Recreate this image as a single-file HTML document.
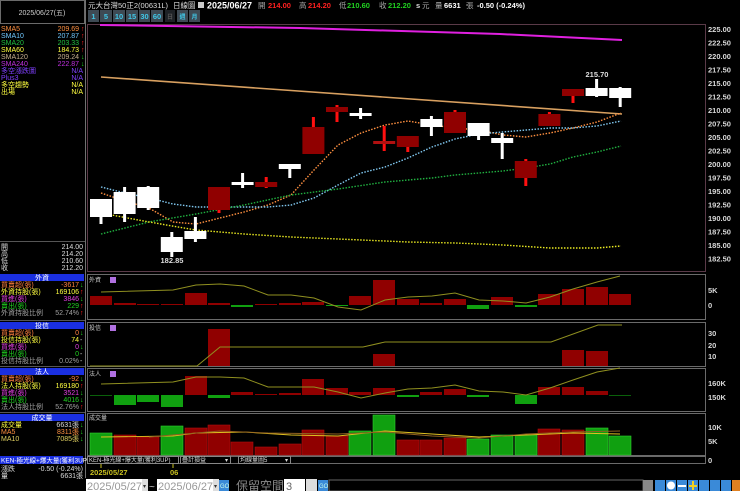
<!DOCTYPE html>
<html><head><meta charset="utf-8"><style>
html,body{margin:0;padding:0;background:#000;width:740px;height:491px;overflow:hidden}
svg{display:block}
text{font-family:"Liberation Sans","Noto Sans CJK TC",sans-serif}
.s{font-size:7px}
.ax{font-size:7.5px;font-weight:bold;fill:#d8d8d8}
</style></head><body>
<svg width="740" height="491" viewBox="0 0 740 491" xmlns="http://www.w3.org/2000/svg">
<rect width="740" height="491" fill="#000"/>
<!-- left panel -->
<rect x="0.5" y="0.5" width="84" height="23" fill="#000" stroke="#6a6a6a"/>
<text x="42" y="15" text-anchor="middle" class="s" fill="#cfcfcf" font-size="7.5">2025/06/27(五)</text>
<line x1="85.5" y1="0" x2="85.5" y2="478" stroke="#707070"/>
<g class="s">
<text x="1" y="31" fill="#ff9040">SMA5</text><text x="79" y="31" text-anchor="end" fill="#ff9040">209.69</text><text x="81" y="31" fill="#ff2020">↑</text>
<text x="1" y="38" fill="#70c8ff">SMA10</text><text x="79" y="38" text-anchor="end" fill="#70c8ff">207.87</text><text x="81" y="38" fill="#ff2020">↑</text>
<text x="1" y="45" fill="#20c040">SMA20</text><text x="79" y="45" text-anchor="end" fill="#20c040">203.33</text><text x="81" y="45" fill="#ff2020">↑</text>
<text x="1" y="52" fill="#ffff40">SMA60</text><text x="79" y="52" text-anchor="end" fill="#ffff40">184.73</text><text x="81" y="52" fill="#ff2020">↑</text>
<text x="1" y="59" fill="#c8b090">SMA120</text><text x="79" y="59" text-anchor="end" fill="#c8b090">209.24</text><text x="81" y="59" fill="#20d020">↓</text>
<text x="1" y="66" fill="#c030e0">SMA240</text><text x="79" y="66" text-anchor="end" fill="#c030e0">222.87</text><text x="81" y="66" fill="#20d020">↓</text>
<text x="1" y="73" fill="#8040ff">多空漲跌圖</text><text x="83" y="73" text-anchor="end" fill="#8040ff">N/A</text>
<text x="1" y="80" fill="#8040ff">Plus3</text><text x="83" y="80" text-anchor="end" fill="#8040ff">N/A</text>
<text x="1" y="87" fill="#ffff40">多空趨勢</text><text x="83" y="87" text-anchor="end" fill="#ffff40">N/A</text>
<text x="1" y="94" fill="#ffff40">出場</text><text x="83" y="94" text-anchor="end" fill="#ffff40">N/A</text>

<line x1="0" y1="241.5" x2="85" y2="241.5" stroke="#555"/>
<text x="1" y="249" fill="#ddd">開</text><text x="83" y="249" text-anchor="end" fill="#ddd">214.00</text>
<text x="1" y="256" fill="#ddd">高</text><text x="83" y="256" text-anchor="end" fill="#ddd">214.20</text>
<text x="1" y="263" fill="#ddd">低</text><text x="83" y="263" text-anchor="end" fill="#ddd">210.60</text>
<text x="1" y="270" fill="#ddd">收</text><text x="83" y="270" text-anchor="end" fill="#ddd">212.20</text>

<rect x="0" y="274" width="84" height="7" fill="#1a2fe0"/><text x="42" y="280" text-anchor="middle" fill="#fff">外資</text>
<text x="1" y="287" fill="#ff8040">買賣超(張)</text><text x="79" y="287" text-anchor="end" fill="#ff8040">-3617</text><text x="80" y="287" fill="#20d020">↓</text>
<text x="1" y="294" fill="#ffff40">外資持股(張)</text><text x="79" y="294" text-anchor="end" fill="#ffff40">169106</text><text x="80" y="294" fill="#ff2020">↑</text>
<text x="1" y="301" fill="#e040e0">買進(張)</text><text x="79" y="301" text-anchor="end" fill="#e040e0">3846</text><text x="80" y="301" fill="#20d020">↓</text>
<text x="1" y="308" fill="#20d020">賣出(張)</text><text x="79" y="308" text-anchor="end" fill="#20d020">229</text><text x="80" y="308" fill="#ff2020">↑</text>
<text x="1" y="315" fill="#a0a0a0">外資持股比例</text><text x="79" y="315" text-anchor="end" fill="#a0a0a0">52.74%</text><text x="80" y="315" fill="#ff2020">↑</text>
<line x1="0" y1="320.5" x2="85" y2="320.5" stroke="#555"/>

<rect x="0" y="322" width="84" height="7" fill="#1a2fe0"/><text x="42" y="328" text-anchor="middle" fill="#fff">投信</text>
<text x="1" y="335" fill="#ff8040">買賣超(張)</text><text x="79" y="335" text-anchor="end" fill="#ff8040">0</text><text x="80" y="335" fill="#20d020">↓</text>
<text x="1" y="342" fill="#ffff40">投信持股(張)</text><text x="79" y="342" text-anchor="end" fill="#ffff40">74</text><text x="80" y="342" fill="#ccc">-</text>
<text x="1" y="349" fill="#e040e0">買進(張)</text><text x="79" y="349" text-anchor="end" fill="#e040e0">0</text><text x="80" y="349" fill="#20d020">↓</text>
<text x="1" y="356" fill="#20d020">賣出(張)</text><text x="79" y="356" text-anchor="end" fill="#20d020">0</text><text x="80" y="356" fill="#ccc">-</text>
<text x="1" y="363" fill="#a0a0a0">投信持股比例</text><text x="79" y="363" text-anchor="end" fill="#a0a0a0">0.02%</text><text x="80" y="363" fill="#ccc">-</text>
<line x1="0" y1="366.5" x2="85" y2="366.5" stroke="#555"/>

<rect x="0" y="368" width="84" height="7" fill="#1a2fe0"/><text x="42" y="374" text-anchor="middle" fill="#fff">法人</text>
<text x="1" y="381" fill="#ff8040">買賣超(張)</text><text x="79" y="381" text-anchor="end" fill="#ff8040">-92</text><text x="80" y="381" fill="#20d020">↓</text>
<text x="1" y="388" fill="#ffff40">法人持股(張)</text><text x="79" y="388" text-anchor="end" fill="#ffff40">169180</text><text x="80" y="388" fill="#ff2020">↑</text>
<text x="1" y="395" fill="#e040e0">買進(張)</text><text x="79" y="395" text-anchor="end" fill="#e040e0">3521</text><text x="80" y="395" fill="#20d020">↓</text>
<text x="1" y="402" fill="#20d020">賣出(張)</text><text x="79" y="402" text-anchor="end" fill="#20d020">4016</text><text x="80" y="402" fill="#20d020">↓</text>
<text x="1" y="409" fill="#a0a0a0">法人持股比例</text><text x="79" y="409" text-anchor="end" fill="#a0a0a0">52.76%</text><text x="80" y="409" fill="#ff2020">↑</text>
<line x1="0" y1="412.5" x2="85" y2="412.5" stroke="#555"/>

<rect x="0" y="414" width="84" height="7" fill="#1a2fe0"/><text x="42" y="420" text-anchor="middle" fill="#fff">成交量</text>
<text x="1" y="427" fill="#ffff40">成交量</text><text x="79" y="427" text-anchor="end" fill="#ddd">6631張</text><text x="80" y="427" fill="#20d020">↓</text>
<text x="1" y="434" fill="#ff9040">MA5</text><text x="79" y="434" text-anchor="end" fill="#ff9040">8311張</text><text x="80" y="434" fill="#20d020">↓</text>
<text x="1" y="441" fill="#e0d060">MA10</text><text x="79" y="441" text-anchor="end" fill="#e0d060">7085張</text><text x="80" y="441" fill="#20d020">↓</text>

<rect x="0" y="456" width="83" height="8" fill="#1a2fe0"/><text x="1" y="462.5" fill="#fff" font-size="6.5">KEN-極光線+爆大量(獲利3UP)</text>
<text x="1" y="471" fill="#ddd">漲跌</text><text x="83" y="471" text-anchor="end" fill="#ddd">-0.50 (-0.24%)</text>
<text x="1" y="478" fill="#ddd">量</text><text x="83" y="478" text-anchor="end" fill="#ddd">6631張</text>
</g>

<!-- header -->
<text x="88" y="8" font-size="7.5" fill="#ddd">元大台灣50正2(00631L)</text>
<text x="173" y="8" font-size="7.5" fill="#ddd">日線圖</text>
<rect x="198" y="2" width="6" height="6" fill="#ccc"/>
<text x="207" y="8.5" font-size="9" font-weight="bold" fill="#fff">2025/06/27</text>
<g font-size="7.5" font-weight="bold">
<text x="258" y="8" fill="#aaa" font-weight="normal">開</text><text x="268" y="8" fill="#ff2020">214.00</text>
<text x="299" y="8" fill="#aaa" font-weight="normal">高</text><text x="308" y="8" fill="#ff2020">214.20</text>
<text x="339" y="8" fill="#aaa" font-weight="normal">低</text><text x="347" y="8" fill="#20d020">210.60</text>
<text x="379" y="8" fill="#aaa" font-weight="normal">收</text><text x="388" y="8" fill="#20d020">212.20</text>
<text x="416" y="8" fill="#ddd">s</text><text x="422" y="8" fill="#aaa" font-weight="normal">元</text>
<text x="435" y="8" fill="#aaa" font-weight="normal">量</text><text x="444" y="8" fill="#fff">6631</text>
<text x="466" y="8" fill="#aaa" font-weight="normal">張</text><text x="477" y="8" fill="#fff">-0.50 (-0.24%)</text>
</g>
<!-- toolbar -->
<g font-size="7.5" font-weight="bold" fill="#40c8e8" text-anchor="middle">
<rect x="88" y="10" width="11" height="12" fill="#3e4a54"/><text x="93.5" y="19">1</text>
<rect x="100" y="10" width="12" height="12" fill="#3e4a54"/><text x="106" y="19">5</text>
<rect x="113" y="10" width="12" height="12" fill="#3e4a54"/><text x="119" y="19">10</text>
<rect x="126" y="10" width="12" height="12" fill="#3e4a54"/><text x="132" y="19">15</text>
<rect x="139" y="10" width="11" height="12" fill="#3e4a54"/><text x="144.5" y="19">30</text>
<rect x="151" y="10" width="12" height="12" fill="#3e4a54"/><text x="157" y="19">60</text>
<rect x="165" y="10" width="10" height="12" fill="#1e2226"/><text x="170" y="19" fill="#555" font-size="6">日</text>
<rect x="177" y="10" width="11" height="12" fill="#3e4a54"/><text x="182.5" y="19" font-size="6">週</text>
<rect x="189" y="10" width="11" height="12" fill="#3e4a54"/><text x="194.5" y="19" font-size="6">月</text>
</g>

<!-- frames -->
<g fill="none" stroke="#5a3a48">
<rect x="87.5" y="24.5" width="618" height="247"/>
</g>
<g fill="none" stroke="#6a6a6a">
<rect x="87.5" y="274.5" width="618" height="45"/>
<rect x="87.5" y="322.5" width="618" height="44"/>
<rect x="87.5" y="368.5" width="618" height="43"/>
<rect x="87.5" y="413.5" width="618" height="42"/>
</g>

<!-- price axis -->
<g class="ax">
<text x="708" y="32">225.00</text><text x="708" y="45.5">222.50</text><text x="708" y="59">220.00</text>
<text x="708" y="72.5">217.50</text><text x="708" y="86">215.00</text><text x="708" y="99.5">212.50</text>
<text x="708" y="113">210.00</text><text x="708" y="126.5">207.50</text><text x="708" y="140">205.00</text>
<text x="708" y="153.5">202.50</text><text x="708" y="167">200.00</text><text x="708" y="180.5">197.50</text>
<text x="708" y="194">195.00</text><text x="708" y="207.5">192.50</text><text x="708" y="221">190.00</text>
<text x="708" y="234.5">187.50</text><text x="708" y="248">185.00</text><text x="708" y="261.5">182.50</text>
<text x="708" y="293">5K</text><text x="708" y="308">0</text>
<text x="708" y="336">30</text><text x="708" y="348">20</text><text x="708" y="359">10</text>
<text x="708" y="386">160K</text><text x="708" y="400">150K</text>
<text x="708" y="430">10K</text><text x="708" y="444">5K</text>
<text x="708" y="463">0</text>
</g>

<!-- MA lines -->
<polyline points="100,25 300,28 500,34 622,40" fill="none" stroke="#e020e0" stroke-width="2"/>
<polyline points="101,77 622,114" fill="none" stroke="#d8a060" stroke-width="1.6"/>
<g fill="none" stroke-width="1.4" stroke-dasharray="1.5,1.5">
<polyline stroke="#ff9040" points="101,193 125,201 149,208 173,222 196,224 220,218 244,212 268,205 291,195 314,170 338,145 361,133 385,125 408,121 432,125 455,128 479,130 503,135 526,137 550,133 573,128 597,122 621,113"/>
<polyline stroke="#80c8f0" points="101,187 125,193 149,198 173,204 196,207 220,207 244,207 268,207 291,205 314,198 338,185 361,173 385,167 408,158 432,147 455,139 479,134 503,132 526,130 550,128 573,128 597,126 621,121"/>
<polyline stroke="#20b040" points="101,234 149,222 196,214 244,205 291,195 338,189 385,182 408,180 432,178 455,175 503,171 526,168 550,164 573,157 597,152 621,146"/>
<polyline stroke="#e8e820" points="101,213 149,222 196,230 244,234 291,237 338,239 385,241 408,242 455,243 503,245 550,248 597,248 621,246"/>
</g>

<!-- candles -->
<g>
<rect x="99.5" y="199" width="3" height="25" fill="#fff"/><rect x="90" y="199" width="22" height="18" fill="#fff"/>
<rect x="123.1" y="187" width="3" height="35" fill="#fff"/><rect x="113.6" y="192" width="22" height="22" fill="#fff"/>
<rect x="146.7" y="186" width="3" height="24" fill="#fff"/><rect x="137.2" y="187" width="22" height="21" fill="#fff"/>
<rect x="170.3" y="232" width="3" height="25" fill="#fff"/><rect x="160.8" y="237" width="22" height="15" fill="#fff"/>
<rect x="193.9" y="217" width="3" height="25" fill="#fff"/><rect x="184.4" y="231" width="22" height="8" fill="#fff"/>
<rect x="217.5" y="187" width="3" height="26" fill="#ff1010"/><rect x="208" y="187" width="22" height="23" fill="#900000"/>
<rect x="241.1" y="173" width="3" height="15" fill="#fff"/><rect x="231.6" y="182" width="22" height="3" fill="#fff"/>
<rect x="264.7" y="177" width="3" height="11" fill="#ff1010"/><rect x="255.2" y="182" width="22" height="5" fill="#900000"/>
<rect x="288.3" y="164" width="3" height="14" fill="#fff"/><rect x="278.8" y="164" width="22" height="5" fill="#fff"/>
<rect x="311.9" y="117" width="3" height="37" fill="#ff1010"/><rect x="302.4" y="127" width="22" height="27" fill="#900000"/>
<rect x="335.5" y="105" width="3" height="17" fill="#ff1010"/><rect x="326" y="107" width="22" height="5" fill="#900000"/>
<rect x="359.1" y="108" width="3" height="11" fill="#fff"/><rect x="349.6" y="113" width="22" height="3" fill="#fff"/>
<rect x="382.7" y="126" width="3" height="25" fill="#ff1010"/><rect x="373.2" y="141" width="22" height="3" fill="#b01010"/>
<rect x="406.3" y="136" width="3" height="16" fill="#ff1010"/><rect x="396.8" y="136" width="22" height="11" fill="#900000"/>
<rect x="429.9" y="116" width="3" height="20" fill="#fff"/><rect x="420.4" y="119" width="22" height="8" fill="#fff"/>
<rect x="453.5" y="110" width="3" height="23" fill="#ff1010"/><rect x="444" y="112" width="22" height="21" fill="#900000"/>
<rect x="477.1" y="123" width="3" height="17" fill="#fff"/><rect x="467.6" y="123" width="22" height="13" fill="#fff"/>
<rect x="500.7" y="133" width="3" height="26" fill="#fff"/><rect x="491.2" y="138" width="22" height="5" fill="#fff"/>
<rect x="524.3" y="159" width="3" height="27" fill="#ff1010"/><rect x="514.8" y="161" width="22" height="17" fill="#900000"/>
<rect x="547.9" y="112" width="3" height="14" fill="#ff1010"/><rect x="538.4" y="114" width="22" height="12" fill="#900000"/>
<rect x="571.5" y="89" width="3" height="14" fill="#ff1010"/><rect x="562" y="89" width="22" height="7" fill="#900000"/>
<rect x="595.1" y="79" width="3" height="18" fill="#fff"/><rect x="585.6" y="88" width="22" height="8" fill="#fff"/>
<rect x="618.7" y="87" width="3" height="20" fill="#fff"/><rect x="609.2" y="88" width="22" height="10" fill="#fff"/>
</g>
<text x="172" y="263" font-size="7.5" font-weight="bold" fill="#ddd" text-anchor="middle">182.85</text>
<text x="597" y="77" font-size="7.5" font-weight="bold" fill="#ddd" text-anchor="middle">215.70</text>

<!-- panel labels -->
<g font-size="6" fill="#ccc">
<text x="89" y="282">外資</text><rect x="110" y="277" width="6" height="6" fill="#b070e0"/>
<text x="89" y="330">投信</text><rect x="110" y="325" width="6" height="6" fill="#b070e0"/>
<text x="89" y="376">法人</text><rect x="110" y="371" width="6" height="6" fill="#b070e0"/>
<text x="89" y="420">成交量</text>
</g>

<!-- 外資 bars, zero 305 -->
<g fill="#900000">
<rect x="90" y="296" width="22" height="9"/><rect x="114" y="303" width="22" height="2"/><rect x="137" y="304" width="22" height="1"/><rect x="161" y="304" width="22" height="1"/>
<rect x="185" y="293" width="22" height="12"/><rect x="208" y="303" width="22" height="2"/><rect x="255" y="304" width="22" height="1"/><rect x="279" y="303" width="22" height="2"/>
<rect x="302" y="302" width="22" height="3"/><rect x="349" y="296" width="22" height="9"/><rect x="373" y="280" width="22" height="25"/>
<rect x="397" y="299" width="22" height="6"/><rect x="420" y="303" width="22" height="2"/><rect x="444" y="299" width="22" height="6"/>
<rect x="491" y="297" width="22" height="8"/><rect x="538" y="294" width="22" height="11"/><rect x="562" y="289" width="22" height="16"/>
<rect x="586" y="287" width="22" height="18"/><rect x="609" y="294" width="22" height="11"/>
</g>
<g fill="#10a010">
<rect x="231" y="305" width="22" height="2"/><rect x="326" y="305" width="22" height="1"/><rect x="467" y="305" width="22" height="4"/><rect x="515" y="305" width="22" height="2"/>
</g>
<polyline points="101,292 173,290 196,285 220,284 244,286 268,295 291,295 314,298 338,307 361,310 385,300 408,297 432,296 455,293 479,300 503,301 526,303 550,297 573,289 597,282 620,276" fill="none" stroke="#909020" stroke-width="1"/>

<!-- 投信 -->
<g fill="#900000">
<rect x="208" y="329" width="22" height="37"/><rect x="373" y="354" width="22" height="12"/><rect x="562" y="350" width="22" height="16"/><rect x="586" y="351" width="22" height="15"/>
</g>
<polyline points="90,366 197,366 220,347 363,347 385,342 551,342 598,325 622,325" fill="none" stroke="#909020" stroke-width="1"/>

<!-- 法人 zero 395 -->
<g fill="#900000">
<rect x="185" y="376" width="22" height="19"/><rect x="231" y="392" width="22" height="3"/><rect x="255" y="394" width="22" height="1"/><rect x="279" y="393" width="22" height="2"/>
<rect x="302" y="379" width="22" height="16"/><rect x="326" y="388" width="22" height="7"/><rect x="349" y="392" width="22" height="3"/><rect x="373" y="388" width="22" height="7"/>
<rect x="420" y="392" width="22" height="3"/><rect x="444" y="389" width="22" height="6"/><rect x="538" y="387" width="22" height="8"/><rect x="562" y="387" width="22" height="8"/><rect x="586" y="391" width="22" height="4"/>
</g>
<g fill="#10a010">
<rect x="90" y="395" width="22" height="1" fill="#0a600a"/><rect x="114" y="395" width="22" height="10"/><rect x="137" y="395" width="22" height="7"/><rect x="161" y="395" width="22" height="12"/>
<rect x="208" y="395" width="22" height="3"/><rect x="397" y="395" width="22" height="2"/><rect x="467" y="395" width="22" height="2"/><rect x="515" y="395" width="22" height="9"/><rect x="609" y="395" width="22" height="1" fill="#0a600a"/>
</g>
<polyline points="101,384 173,382 196,377 220,377 244,378 268,387 314,387 338,392 361,398 385,393 408,389 432,388 455,385 479,391 503,392 526,395 550,388 573,380 597,372 620,368" fill="none" stroke="#909020" stroke-width="1"/>

<!-- 成交量 zero 455 -->
<g fill="#10a010" stroke="#30d030" stroke-width="0.6">
<rect x="90" y="433" width="22" height="22"/><rect x="161" y="426" width="22" height="29"/><rect x="349" y="431" width="22" height="24"/><rect x="373" y="415" width="22" height="40"/>
<rect x="467" y="439" width="22" height="16"/><rect x="491" y="435" width="22" height="20"/><rect x="515" y="435" width="22" height="20"/><rect x="586" y="428" width="22" height="27"/><rect x="609" y="436" width="22" height="19"/>
</g>
<g fill="#900000" stroke="#b01010" stroke-width="0.6">
<rect x="114" y="435" width="22" height="20"/><rect x="137" y="437" width="22" height="18"/><rect x="185" y="428" width="22" height="27"/><rect x="208" y="425" width="22" height="30"/>
<rect x="231" y="442" width="22" height="13"/><rect x="255" y="447" width="22" height="8"/><rect x="279" y="444" width="22" height="11"/><rect x="302" y="430" width="22" height="25"/>
<rect x="326" y="436" width="22" height="19"/><rect x="397" y="440" width="22" height="15"/><rect x="420" y="440" width="22" height="15"/><rect x="444" y="438" width="22" height="17"/>
<rect x="538" y="429" width="22" height="26"/><rect x="562" y="430" width="22" height="25"/>
</g>
<polyline points="101,437 173,436 196,433 244,432 291,435 338,436 385,431 432,434 479,437 526,435 573,433 620,434" fill="none" stroke="#e0c020" stroke-width="0.9"/>
<polyline points="149,437 220,431 268,433 338,434 385,432 432,436 479,438 526,434 573,432 620,431" fill="none" stroke="#906020" stroke-width="0.9"/>

<!-- KEN row -->
<rect x="87.5" y="456.5" width="618" height="7" fill="#000" stroke="#6a6a6a"/>
<g font-size="6" fill="#ddd">
<rect x="87.5" y="456.5" width="91" height="7" fill="#000" stroke="#888"/><text x="89" y="462">KEN-極光線+爆大量(獲利3UP)</text>
<rect x="180.5" y="456.5" width="50" height="7" fill="#000" stroke="#888"/><text x="182" y="462">疊計損益</text><text x="225" y="462">▾</text>
<rect x="238.5" y="456.5" width="52" height="7" fill="#000" stroke="#888"/><text x="240" y="462">均線量圖5</text><text x="285" y="462">▾</text>
</g>
<line x1="101" y1="464" x2="101" y2="468" stroke="#c8c020"/><line x1="173" y1="464" x2="173" y2="468" stroke="#c8c020"/>
<text x="90" y="475" font-size="7.5" font-weight="bold" fill="#c8c020">2025/05/27</text>
<text x="170" y="475" font-size="7.5" font-weight="bold" fill="#c8c020">06</text>

<!-- bottom inputs -->
<rect x="86" y="479" width="62" height="12" fill="#fff"/><text x="87" y="490" font-size="11" fill="#999">2025/05/27</text>
<rect x="142" y="479" width="6" height="12" fill="#ddd"/><text x="143" y="488" font-size="6" fill="#333">▾</text>
<text x="149" y="490" font-size="10" fill="#ccc">~</text>
<rect x="157" y="479" width="62" height="12" fill="#fff"/><text x="158" y="490" font-size="11" fill="#999">2025/06/27</text>
<rect x="213" y="479" width="6" height="12" fill="#ddd"/><text x="214" y="488" font-size="6" fill="#333">▾</text>
<rect x="219" y="480" width="10" height="11" fill="#3a8ad8"/><text x="220" y="488" font-size="6" fill="#cfe">GO</text>
<text x="236" y="490" font-size="12" fill="#8a8a8a" font-family="Noto Serif CJK SC, serif">保留空間</text>
<rect x="284" y="479" width="21" height="12" fill="#fff"/><text x="286" y="490" font-size="11" fill="#666">3</text>
<rect x="306" y="479" width="11" height="12" fill="#ddd"/>
<rect x="318" y="480" width="10" height="11" fill="#3a8ad8"/><text x="319" y="488" font-size="6" fill="#cfe">GO</text>
<rect x="329" y="480" width="314" height="11" fill="#000" stroke="#666"/>
<rect x="643" y="480" width="10" height="11" fill="#888"/>
<g fill="#3a8ad8">
<rect x="655" y="480" width="10" height="11"/><rect x="666" y="480" width="10" height="11"/><rect x="677" y="480" width="10" height="11"/>
<rect x="688" y="480" width="10" height="11"/><rect x="699" y="480" width="10" height="11"/><rect x="710" y="480" width="10" height="11"/><rect x="721" y="480" width="10" height="11"/>
</g>
<circle cx="671" cy="485.5" r="4" fill="#fff"/><rect x="678" y="485" width="8" height="2" fill="#fff"/>
<rect x="689" y="485" width="8" height="2" fill="#f0d020"/><rect x="692" y="481" width="2" height="9" fill="#f0d020"/>
<rect x="732" y="480" width="8" height="11" fill="#e08020"/>
</svg>
</body></html>
